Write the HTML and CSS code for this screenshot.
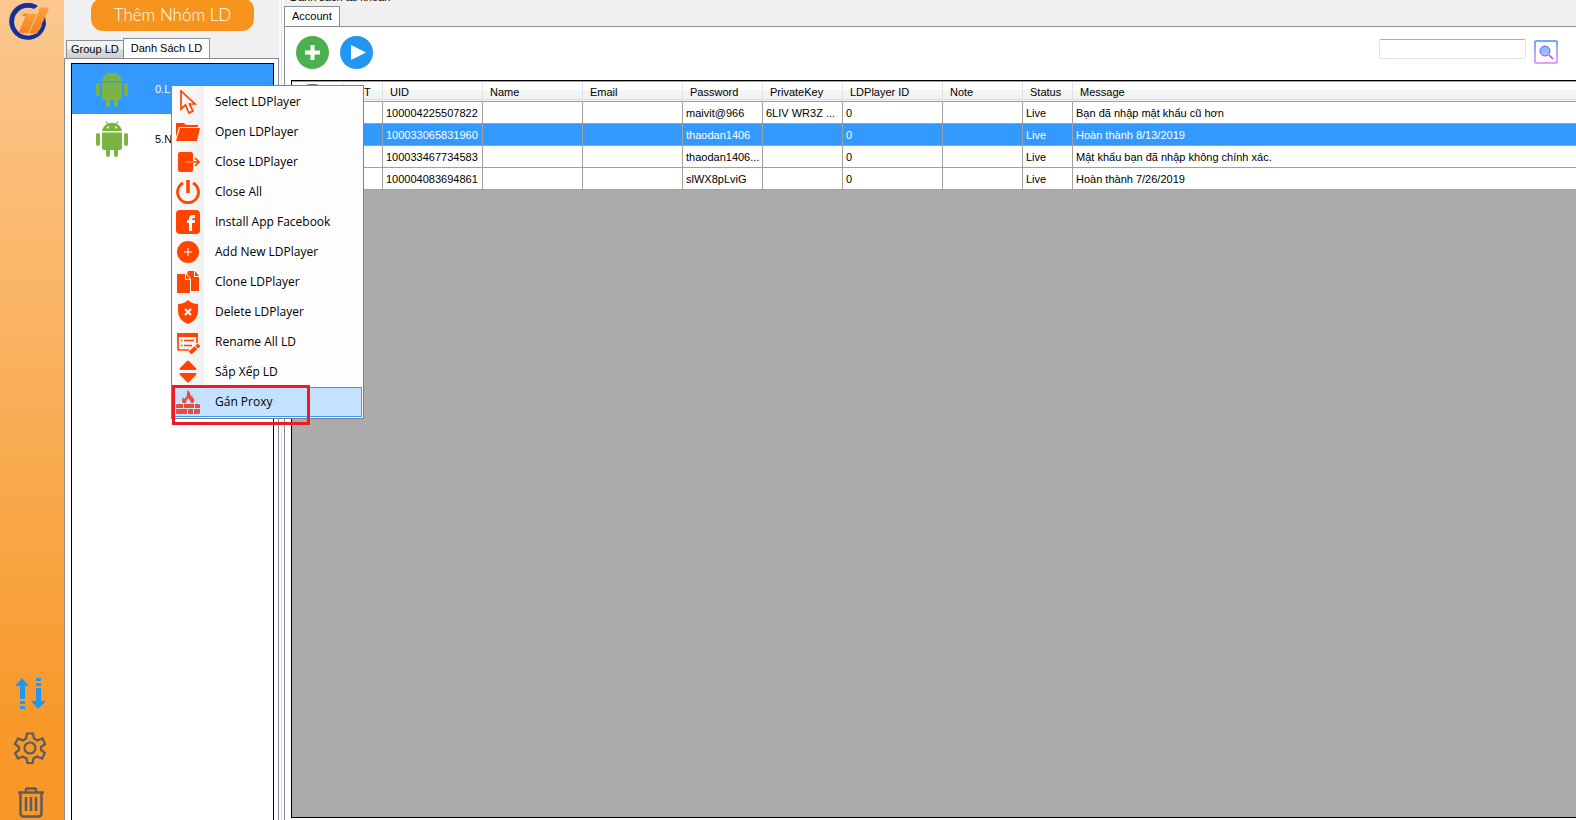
FILE: index.html
```html
<!DOCTYPE html>
<html lang="vi">
<head>
<meta charset="utf-8">
<title>LD Manager</title>
<link rel="stylesheet" href="styles.css">
</head>
<body>
<div class="app">
  <aside class="sidebar">
    <svg class="logo" viewBox="0 0 42 38" aria-hidden="true">
      <defs>
        <linearGradient id="flame" x1="0" y1="0" x2="0" y2="1">
          <stop offset="0" stop-color="#f9a13c"/><stop offset="1" stop-color="#f57f22"/>
        </linearGradient>
      </defs>
      <path d="M30 3A18.500 18.500 0 1 0 38 21L37 13 34 20A14 14 0 1 1 26 6z" fill="#13309c"/>
      <path d="M18 12l2-2 2 1.500 2-1 5 1-9 19-3-1-2 1-4-1.500z" fill="url(#flame)"/>
      <path d="M31 6l2-2 2 1 2-1 4 2-12 25-3-1-2 1-4-1.500z" fill="url(#flame)"/>
      <path d="M20.500 30.500L30.500 8" stroke="#fbc78b" fill="none"/>
      <path d="M12 9l4 2 3-1-1 3-5-.5 3-1z" fill="#e9802a"/>
    </svg>
    <nav class="side-nav">
      <button class="icon-button" aria-label="Sort">
        <svg viewBox="0 0 32 32" fill="#2196f3"><path d="M8 1l7 8h-4v13H6V9H1zM6 24h5v3H6zM6 29h5v3H6zM22 1h5v3h-5zM22 6h5v3h-5zM22 11h5v13h5l-8 8-7-8h5z"/></svg>
      </button>
      <button class="icon-button" aria-label="Settings">
        <svg viewBox="0 0 32 32" fill="none" stroke="#5c5c5c" stroke-width="2.200"><circle cx="16" cy="16" r="5.500"/><path d="M13 1.500h6l1 5 3.500 2 5-2 2.500 5.500-4 3v3l4 3-3 5.500-5-2-3.500 2-1 4.500h-5l-1-4.500-3.500-2-5 2-3-5.500 4-3v-3l-4-3L4 6.500l5 2 3-2z"/></svg>
      </button>
      <button class="icon-button" aria-label="Delete">
        <svg viewBox="0 0 32 32" fill="none" stroke="#5c5c5c" stroke-width="2.500"><path d="M4 5.500h26M12 5V3q0-1.500 1-1.500h8q1 0 1 1.500v2M6.500 6v20q0 3.500 3 3.500h15q3 0 3-3.500V6M12 10v14M17 10v14M22 10v14"/></svg>
      </button>
    </nav>
  </aside>

  <section class="devices">
    <button class="add-group">Thêm Nhóm LD</button>
    <div class="tabs">
      <button class="tab">Group LD</button>
      <button class="tab tab-active">Danh Sách LD</button>
    </div>
    <div class="device-page">
      <ul class="device-list">
        <li class="device device-selected">
          <svg viewBox="0 0 32 36" fill="#7cb342"><path d="M6 10q1-5 5-7L9.500.500l1-.500 1.700 2.500q4-1.500 7.600 0L21.500 0l1 .500L21 3q4 2 5 7zM6 11.500h20V27q0 2-2 2h-2v5q0 2-2 2t-2-2v-5h-4v5q0 2-2 2t-2-2v-5H8q-2 0-2-2z"/><rect y="12" width="4" height="13" rx="2"/><rect x="28" y="12" width="4" height="13" rx="2"/><circle cx="12" cy="6.500" r="1" fill="#39f"/><circle cx="20" cy="6.500" r="1" fill="#39f"/></svg>
          <span>0.L</span>
        </li>
        <li class="device">
          <svg viewBox="0 0 32 36" fill="#7cb342"><path d="M6 10q1-5 5-7L9.500.500l1-.500 1.700 2.500q4-1.500 7.600 0L21.500 0l1 .500L21 3q4 2 5 7zM6 11.500h20V27q0 2-2 2h-2v5q0 2-2 2t-2-2v-5h-4v5q0 2-2 2t-2-2v-5H8q-2 0-2-2z"/><rect y="12" width="4" height="13" rx="2"/><rect x="28" y="12" width="4" height="13" rx="2"/><circle cx="12" cy="6.500" r="1" fill="#fff"/><circle cx="20" cy="6.500" r="1" fill="#fff"/></svg>
          <span>5.N</span>
        </li>
      </ul>
    </div>
  </section>

  <div class="splitter"></div>

  <main class="accounts">
    <div class="group-title">Danh sách tài khoản</div>
    <div class="tabs account-tabs">
      <button class="tab tab-active">Account</button>
    </div>
    <div class="account-page">
      <div class="toolbar">
        <button class="round" aria-label="Add"><svg viewBox="0 0 33 33"><circle cx="16.500" cy="16.500" r="16.500" fill="#4caf50"/><path d="M16.500 9v15M9 16.500h15" stroke="#fff" stroke-width="4"/></svg></button>
        <button class="round" aria-label="Run"><svg viewBox="0 0 33 33"><circle cx="16.500" cy="16.500" r="16.500" fill="#2196f3"/><path d="M11 9l15 7.500L11 24z" fill="#fff"/></svg></button>
        <input class="search" type="text" aria-label="Search">
        <button class="find" aria-label="Find">
          <svg viewBox="0 0 24 24" fill="none">
            <defs>
              <linearGradient id="frame" x1="0" y1="0" x2="0" y2="1"><stop offset="0" stop-color="#448aff"/><stop offset=".6" stop-color="#a78bfa"/><stop offset="1" stop-color="#e07bff"/></linearGradient>
              <linearGradient id="lens" x1="0" y1="0" x2="0" y2="1"><stop offset="0" stop-color="#5cc8ff"/><stop offset="1" stop-color="#d3b0ff"/></linearGradient>
            </defs>
            <rect x="1" y="1" width="22" height="22" rx="1" stroke="url(#frame)" stroke-width="1.500"/>
            <circle cx="11" cy="11" r="5" fill="url(#lens)" stroke="#7a5af0"/>
            <path d="M15 15l4 4" stroke="#9445e8" stroke-width="1.500"/>
          </svg>
        </button>
      </div>
      <div class="grid">
        <table>
          <colgroup><col class="c-check"><col class="c-no"><col class="c-100"><col class="c-100"><col class="c-100"><col class="c-80"><col class="c-80"><col class="c-100"><col class="c-80"><col class="c-50"><col></colgroup>
          <thead>
            <tr><th class="check"><input type="checkbox" aria-label="Select all"></th><th>STT</th><th>UID</th><th>Name</th><th>Email</th><th>Password</th><th>PrivateKey</th><th>LDPlayer ID</th><th>Note</th><th>Status</th><th>Message</th></tr>
          </thead>
          <tbody>
            <tr><td></td><td></td><td>100004225507822</td><td></td><td></td><td>maivit@966</td><td>6LIV WR3Z ...</td><td>0</td><td></td><td>Live</td><td>Bạn đã nhập mật khẩu cũ hơn</td></tr>
            <tr class="row-selected"><td></td><td></td><td>100033065831960</td><td></td><td></td><td>thaodan1406</td><td></td><td>0</td><td></td><td>Live</td><td>Hoàn thành 8/13/2019</td></tr>
            <tr><td></td><td></td><td>100033467734583</td><td></td><td></td><td>thaodan1406...</td><td></td><td>0</td><td></td><td>Live</td><td>Mật khẩu bạn đã nhập không chính xác.</td></tr>
            <tr><td></td><td></td><td>100004083694861</td><td></td><td></td><td>slWX8pLviG</td><td></td><td>0</td><td></td><td>Live</td><td>Hoàn thành 7/26/2019</td></tr>
          </tbody>
        </table>
      </div>
    </div>
  </main>
</div>

<div class="menu" role="menu">
  <button role="menuitem"><svg viewBox="0 0 24 24" fill="none" stroke="#ff4500" stroke-width="1.700"><path d="M5 1v18l4.500-4 3.500 8 4-2-3.500-7H19z"/></svg>Select LDPlayer</button>
  <button role="menuitem"><svg viewBox="0 0 24 24" fill="#ff4500"><path d="M0 3h8l2 2h12v2H3L0 17zM4 8h20l-3 13H0z"/></svg>Open LDPlayer</button>
  <button role="menuitem"><svg viewBox="0 0 24 24" fill="#ff4500"><path d="M4 2h11q2 0 2 2v7H9v2h8v7q0 2-2 2H4q-2 0-2-2V4q0-2 2-2z"/><path d="M9 12h14M19 8l4 4-4 4" fill="none" stroke="#ff4500" stroke-width="1.700"/></svg>Close LDPlayer</button>
  <button role="menuitem"><svg viewBox="0 0 24 24" fill="none" stroke="#ff4500" stroke-width="2.800"><path d="M7 3a10.500 10.500 0 1 0 10 0"/><path d="M12 0v13" stroke-width="3.500"/></svg>Close All</button>
  <button role="menuitem"><svg viewBox="0 0 24 24"><rect width="24" height="24" rx="4" fill="#ff4500"/><path d="M13 21v-8h-2v-3h2V9q0-4 4-4h2v3h-1q-2 0-2 2h3l-.500 3H16v8z" fill="#fff"/></svg>Install App Facebook</button>
  <button role="menuitem"><svg viewBox="0 0 24 24"><circle cx="12" cy="12" r="11" fill="#ff4500"/><path d="M12 8v8M8 12h8" stroke="#fff"/></svg>Add New LDPlayer</button>
  <button role="menuitem"><svg viewBox="0 0 24 24" fill="#ff4500"><path d="M1 4h8v6h5v13H1zM10 4l4 5h-4zM12 1h6v6h5v14h-8V9l-4-5zM19 1l4 5h-4z"/></svg>Clone LDPlayer</button>
  <button role="menuitem"><svg viewBox="0 0 24 24"><path d="M12 0q4 4 10 4v7q0 9-10 13Q2 20 2 11V4q6 0 10-4z" fill="#ff4500"/><path d="M9 9l6 6m0-6l-6 6" stroke="#fff" stroke-width="2"/></svg>Delete LDPlayer</button>
  <button role="menuitem"><svg viewBox="0 0 24 24" fill="none" stroke="#ff4500" stroke-width="1.700"><path d="M13 20H3q-1 0-1-1V5h19v8M8 10.500h10M8 15.500h8M5 10.500h1.500M5 15.500h1.500"/><path d="M1 5h21" stroke-width="4"/><path d="M14 23l9-8" stroke-width="4" stroke-dasharray="8 1"/></svg>Rename All LD</button>
  <button role="menuitem"><svg viewBox="0 0 24 24" fill="#ff4500"><path d="M4 10q-1 0 0-2l7-7q1-1 2 0l7 7q1 2 0 2zM4 13h16q1 0 0 2l-7 7q-1 1-2 0l-7-7q-1-2 0-2z"/></svg>Sắp Xếp LD</button>
  <button role="menuitem" class="menu-hot"><svg viewBox="0 0 24 24" fill="#e74c3c"><path d="M7 13q-2-2 0-6l1 2q3-2 3-5 0-3 1-4 3 3 3 7l1-2q1 3 1 4l1-1q1 3-1 5h-2q0-2-3-5-2 2-2 5zM1 14h6v4H0v-3zM8 14h10v4H8zM19 14h4l1 1v3h-5zM0 19h11v5H1l-1-1zM12 19h5v5h-5zM18 19h6v4l-1 1h-5z"/></svg>Gán Proxy</button>
</div>
<div class="highlight"></div>
</body>
</html>
```
FILE: styles.css
```css
* { box-sizing: border-box; }

body {
  margin: 0;
  background: #f0f0f0;
  color: #000;
  font: 11px/13px "Liberation Sans", Arial, sans-serif;
}

button {
  border: 0;
  padding: 0;
  background: none;
  color: inherit;
  font: inherit;
}

svg { display: block; }

.app {
  display: flex;
  height: 100vh;
  overflow: hidden;
}

/* Sidebar */
.sidebar {
  display: flex;
  flex-direction: column;
  justify-content: space-between;
  flex: 0 0 64px;
  padding: 3px 0 1px 8px;
  background: linear-gradient(#fbc88f, #f79828 90%);
}

.logo { width: 42px; height: 38px; }

.side-nav {
  display: flex;
  flex-direction: column;
  gap: 23px;
  padding-left: 6px;
}

.icon-button, .icon-button svg { width: 32px; height: 32px; }

/* Device panel */
.devices {
  display: flex;
  flex-direction: column;
  flex: 0 0 215px;
}

.add-group {
  flex: none;
  width: 163px;
  height: 33px;
  margin: -2px 0 0 27px;
  border-radius: 12px;
  background: #f7941d;
  color: #fff;
  font: 300 17px/33px Lato, sans-serif;
}

.tabs {
  display: flex;
  align-items: flex-end;
  flex: none;
}

.devices .tabs { padding: 7px 0 0 2px; }

.tab {
  height: 18px;
  padding: 0 4px;
  border: 1px solid #898c95;
  border-bottom: 0;
  background: linear-gradient(#f2f2f2 50%, #dcdcdc 50%, #d0d0d0);
  white-space: nowrap;
}

.tab-active {
  height: 21px;
  margin: 0 0 -1px -1px;
  padding: 0 7px 2px;
  background: #fff;
}

.device-page {
  flex: 1;
  min-height: 0;
  padding: 4px 4px 0 6px;
  border: solid #898c95;
  border-width: 1px 1px 0;
  background: #fff;
}

.device-list {
  height: 100%;
  margin: 0;
  padding: 0;
  border: solid #000;
  border-width: 1px 1px 0;
  list-style: none;
}

.device {
  display: flex;
  align-items: center;
  gap: 27px;
  height: 50px;
  padding-left: 24px;
}

.device svg { width: 32px; height: 36px; }

.device-selected { background: #39f; color: #fff; }

.splitter {
  flex: 0 0 5px;
  border: solid #fafbff;
  border-width: 0 2px;
  background: #dce3ee;
}

/* Account panel */
.accounts {
  display: flex;
  flex-direction: column;
  flex: 1;
  min-width: 0;
}

.group-title {
  display: flex;
  align-items: flex-end;
  height: 6px;
  padding: 0 0 3px 6px;
  line-height: 12px;
}

.account-tabs .tab { margin-left: 0; }

.account-page {
  display: flex;
  flex-direction: column;
  flex: 1;
  min-height: 0;
  padding: 0 0 2px 6px;
  border: solid #898c95;
  border-width: 1px 0 0 1px;
  background: #fff;
}

.toolbar {
  display: flex;
  align-items: flex-start;
  gap: 11px;
  flex: 0 0 53px;
  padding: 9px 18px 0 5px;
}

.round, .round svg { width: 33px; height: 33px; }

.search {
  width: 147px;
  height: 20px;
  margin: 3px 0 0 auto;
  border: 1px solid #e2e3ea;
  border-top-color: #abadb3;
  border-radius: 2px;
}

.find { margin: 4px 0 0 -3px; }

.find svg { width: 24px; height: 24px; }

.grid {
  flex: 1;
  border: solid #000;
  border-width: 1px 0 1px 1px;
  background: #ababab;
}

table {
  width: 100%;
  border-spacing: 0;
  border-top: 1px solid #a0a0a0;
  table-layout: fixed;
}

.c-check { width: 51px; }
.c-no { width: 40px; }
.c-50 { width: 50px; }
.c-80 { width: 80px; }
.c-100 { width: 100px; }

th, td {
  overflow: hidden;
  text-align: left;
  font-weight: normal;
  white-space: nowrap;
}

th {
  height: 20px;
  padding: 1px 0 0 7px;
  border-right: 1px solid #e3e4e6;
  border-bottom: 1px solid #a0a0a0;
  background: linear-gradient(#fff 40%, #f4f5f7 40%, #eff0f2 90%, #d5d5d5 90%, #fff);
}

.check { vertical-align: top; }

.check input { display: block; width: 13px; height: 13px; margin: 1px 7px 0; }

td {
  height: 22px;
  padding: 2px 0 0 3px;
  border-right: 1px solid #a0a0a0;
  border-bottom: 1px solid #a0a0a0;
  background: #fff;
}

th:last-child, td:last-child { border-right: 0; }

.row-selected td { background: #39f; color: #fff; }

/* Context menu, floating over the panels */
.menu {
  position: absolute;
  top: 85px;
  left: 171px;
  display: flex;
  flex-direction: column;
  width: 193px;
  padding: 1px;
  border: 1px solid #808080;
  background: linear-gradient(90deg, #fcfcfc, #f0f0f0 32px, #fdfdfd 32px);
}

.menu button {
  display: flex;
  align-items: center;
  gap: 15px;
  height: 30px;
  padding-left: 3px;
  font: 12px/16px "Open Sans", "Noto Sans", sans-serif;
}

.menu svg { width: 24px; height: 24px; }

.menu .menu-hot { background: #c4e1ff; box-shadow: inset 0 0 0 1px #39f; }

.highlight {
  position: absolute;
  top: 385px;
  left: 172px;
  width: 138px;
  height: 40px;
  border: 3px solid #ed1c24;
  pointer-events: none;
}
```
